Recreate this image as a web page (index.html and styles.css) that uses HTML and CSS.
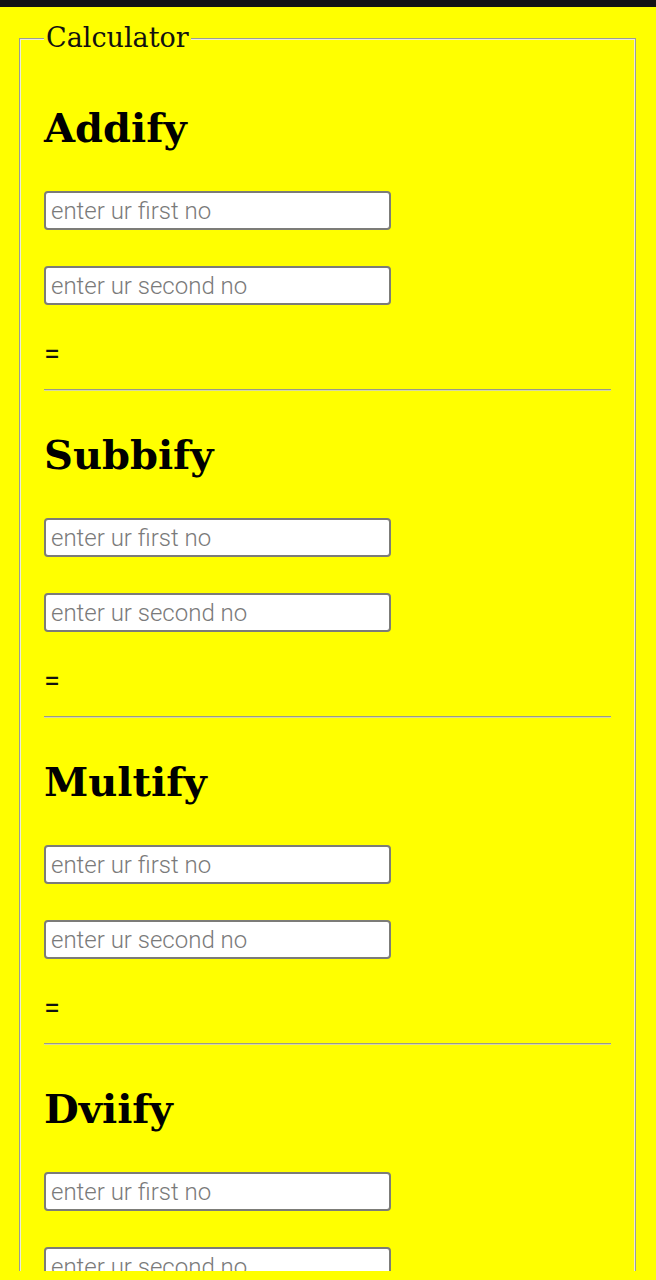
FILE: index.html
```html
<!DOCTYPE html>
<html lang="en">
<head>
<meta charset="utf-8">
<title>Calculator</title>
<link rel="stylesheet" href="styles.css">
</head>
<body>
<div class="topbar"></div>
<div class="screen">
  <fieldset class="calc">
    <legend>Calculator</legend>
    <section class="op">
      <h2>Addify</h2>
      <input type="number" placeholder="enter ur first no">
      <input type="number" placeholder="enter ur second no">
      <div class="result">=</div>
      <hr>
    </section>
    <section class="op">
      <h2>Subbify</h2>
      <input type="number" placeholder="enter ur first no">
      <input type="number" placeholder="enter ur second no">
      <div class="result">=</div>
      <hr>
    </section>
    <section class="op">
      <h2>Multify</h2>
      <input type="number" placeholder="enter ur first no">
      <input type="number" placeholder="enter ur second no">
      <div class="result">=</div>
      <hr>
    </section>
    <section class="op">
      <h2>Dviify</h2>
      <input type="number" placeholder="enter ur first no">
      <input type="number" placeholder="enter ur second no">
      <div class="result">=</div>
      <hr>
    </section>
  </fieldset>
</div>
</body>
</html>
```

FILE: styles.css
```css
html, body {
  margin: 0;
  padding: 0;
  background: #ffff00;
}
body {
  height: 1280px;
  overflow: hidden;
}
.topbar {
  height: 7px;
  background: #141414;
}
.screen {
  height: 1264px;
  overflow: hidden;
}
.calc {
  margin: 15px 20px 0 19px;
  padding: 50px 24px 0;
  border: 1px solid #9c9c94;
  box-shadow: inset 0 0 0 1px #ececd8;
}
.calc legend {
  padding: 0 2px;
  background: #ffff00;
  font-family: "DejaVu Serif", serif;
  font-size: 27px;
  line-height: 32px;
  color: #111;
}
.op {
  display: flex;
  flex-direction: column;
  align-items: flex-start;
}
.op h2 {
  margin: 0;
  font-family: "DejaVu Serif", serif;
  font-weight: bold;
  font-size: 40px;
  line-height: 48px;
  color: #000;
}
.op input {
  box-sizing: border-box;
  width: 347px;
  height: 39px;
  margin: 39px 0 0;
  padding: 0 5px;
  border: 2px solid #7c7c78;
  border-radius: 4px;
  background: #fff;
  font-family: Roboto, sans-serif;
  font-weight: 300;
  font-size: 24px;
  color: #222;
  outline: none;
}
.op input + input {
  margin-top: 36px;
}
.op input::placeholder {
  color: #7a7a7a;
}
.result {
  margin-top: 36px;
  font-family: Roboto, sans-serif;
  font-size: 29px;
  line-height: 26px;
  color: #111;
}
.op hr {
  align-self: stretch;
  margin: 22px 0 40px;
  border: 0;
  border-top: 1px solid #9a9a8a;
  border-bottom: 1px solid #d8d8a0;
  height: 0;
}
```
